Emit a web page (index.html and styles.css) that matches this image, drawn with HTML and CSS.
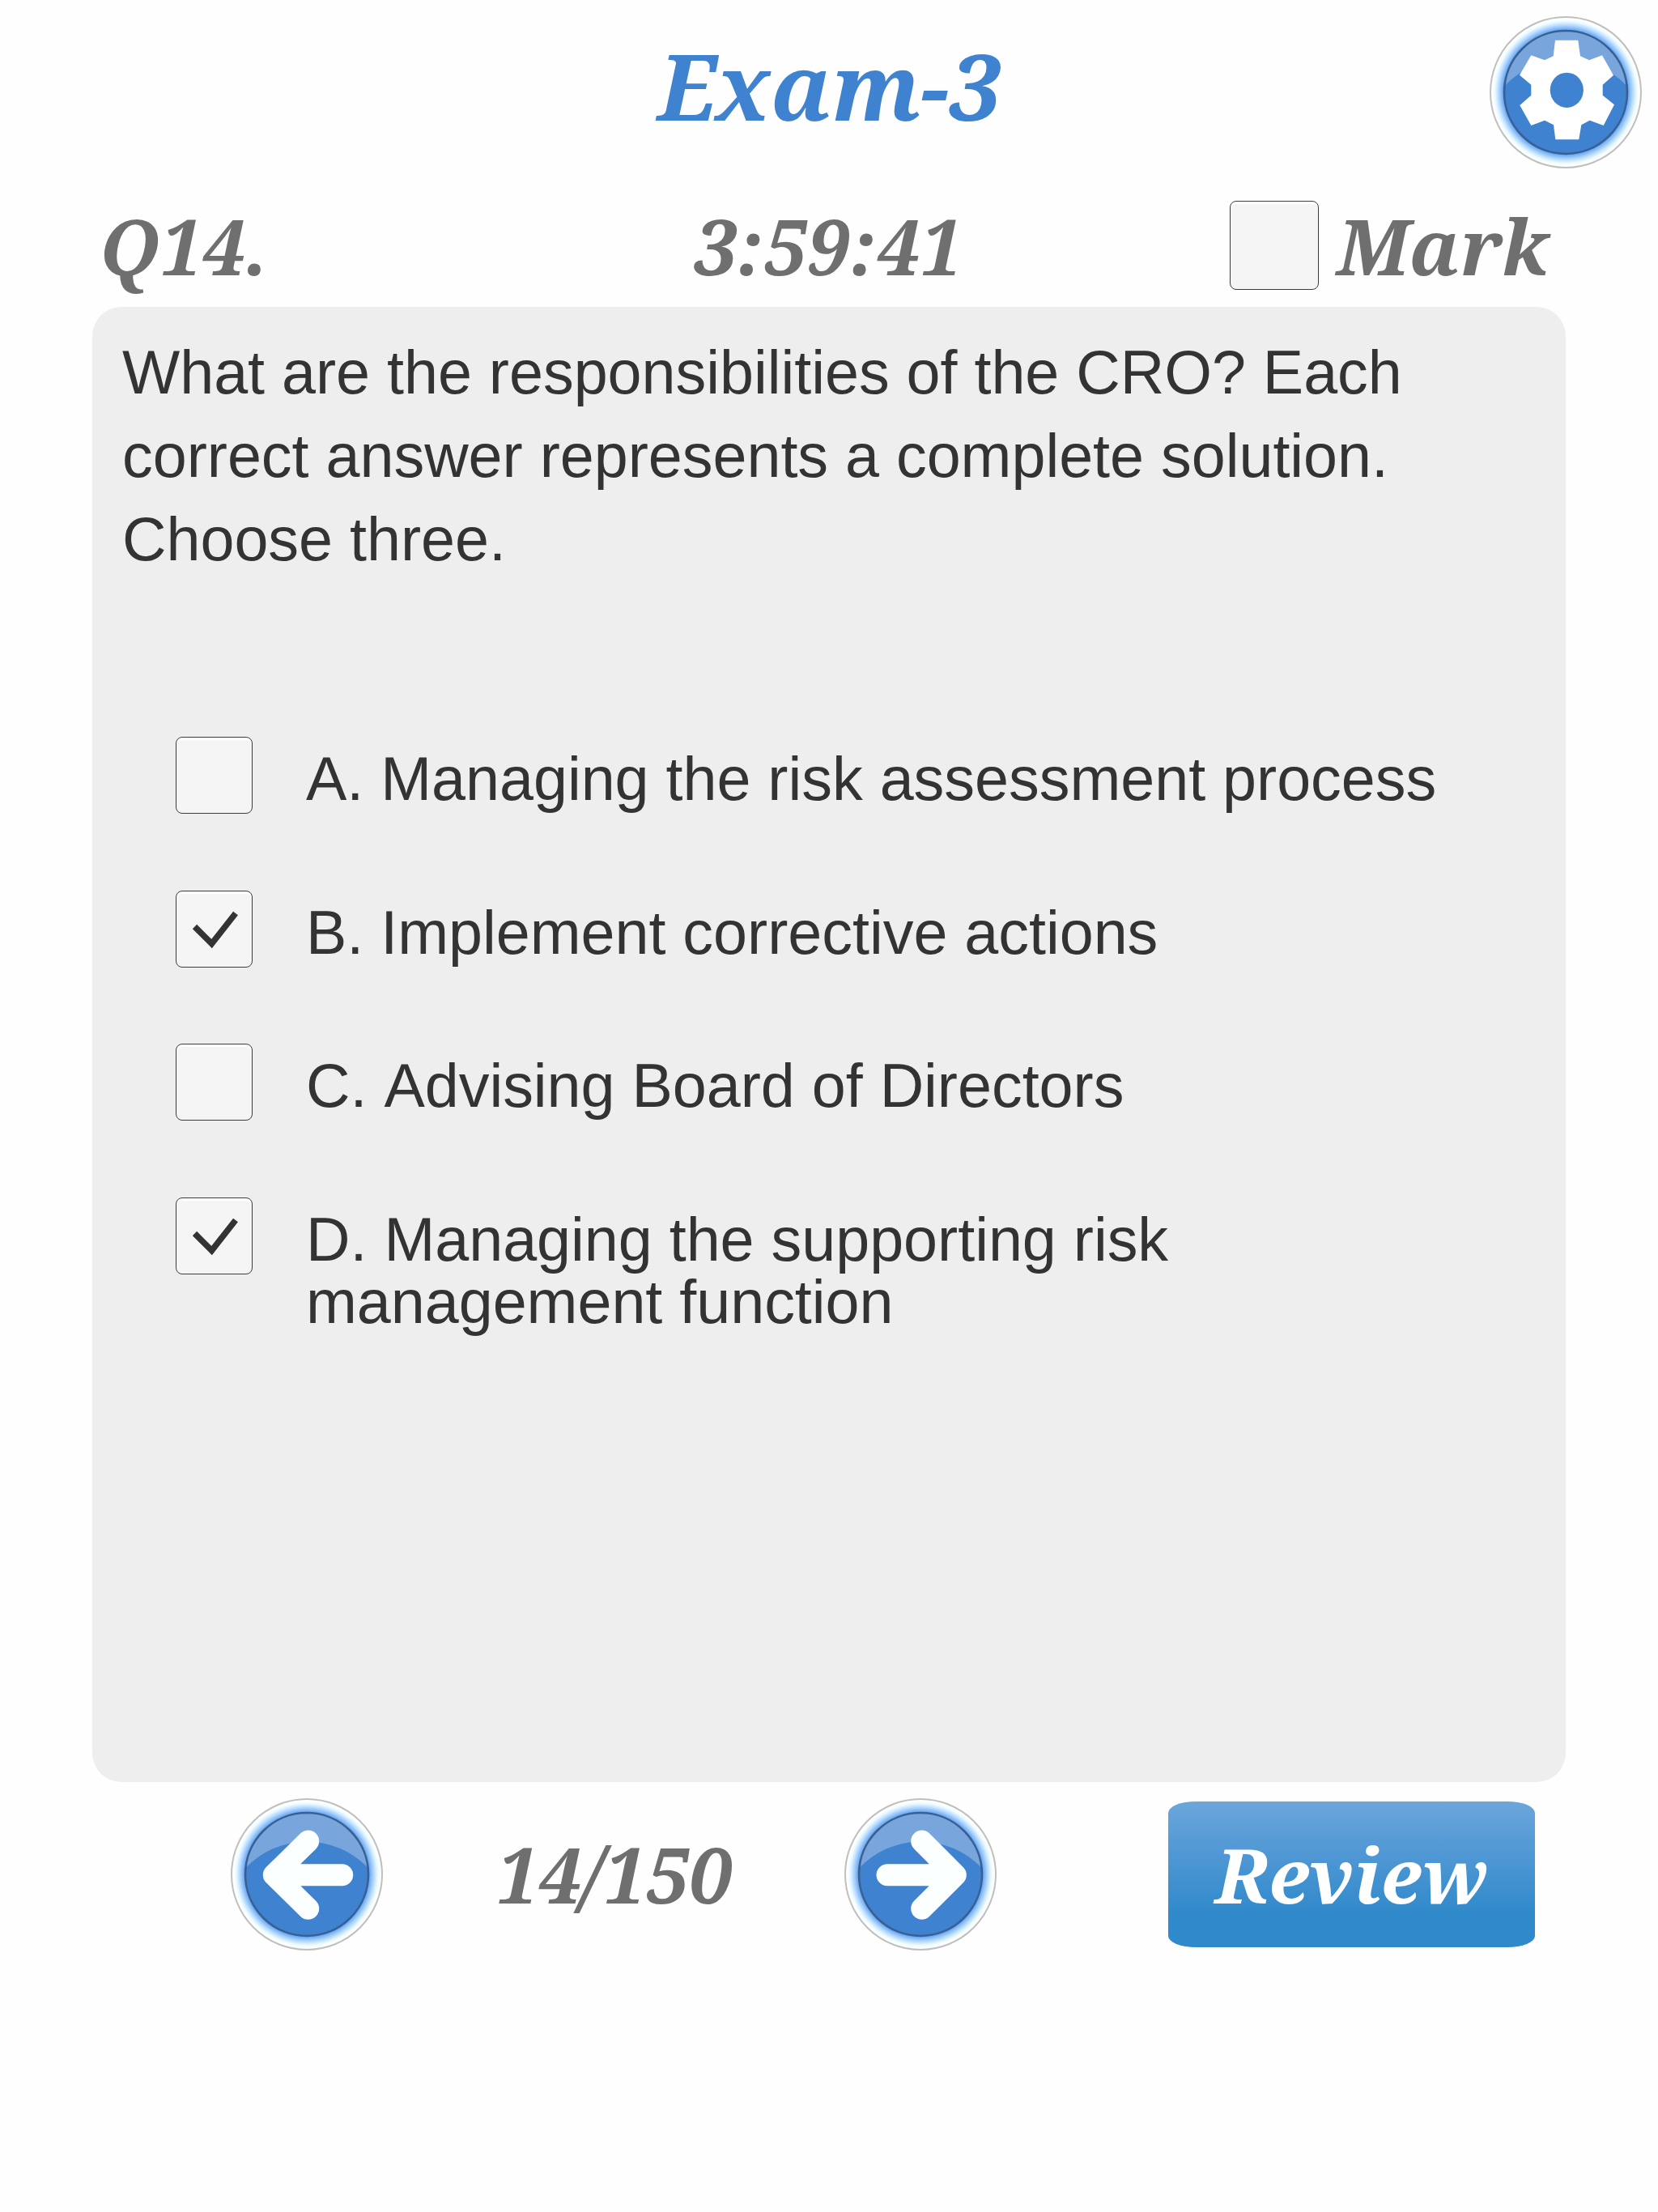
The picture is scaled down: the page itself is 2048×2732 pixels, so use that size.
FILE: index.html
```
<!DOCTYPE html>
<html lang="en">
<head>
  <meta charset="UTF-8" />
  <meta name="viewport" content="width=device-width, initial-scale=1.0"/>
  <title>Exam-3</title>
  <link rel="stylesheet" href="styles.css">
</head>
<body>
  <!-- shared glossy button background -->
  <svg class="defs" width="0" height="0">
    <defs>
      <radialGradient id="glow" gradientUnits="userSpaceOnUse" cx="95" cy="95" r="93">
        <stop offset="0.82" stop-color="#5c9ff0"/>
        <stop offset="0.86" stop-color="#8dc0fb"/>
        <stop offset="0.9" stop-color="#c0e0ff"/>
        <stop offset="0.94" stop-color="#eafaff"/>
        <stop offset="0.97" stop-color="#fdffff"/>
        <stop offset="1" stop-color="#ffffff"/>
      </radialGradient>
      <symbol id="disc" viewBox="0 0 190 190">
        <circle cx="95" cy="95" r="93" fill="url(#glow)" stroke="#bfbfbf" stroke-width="2"/>
        <circle cx="95" cy="95" r="76" fill="#3f82cf"/>
        <path d="M19.5 87A76 76 0 0 1 170.5 87A104 104 0 0 0 19.5 87Z" fill="#78a5dc"/>
        <circle cx="95" cy="95" r="76" fill="none" stroke="#3a6090" stroke-width="2.6"/>
      </symbol>
    </defs>
  </svg>

  <div class="page">
    <header class="header">
      <h1 class="title">Exam-3</h1>
      <button class="round-btn settings" aria-label="Settings">
        <svg viewBox="0 0 190 190">
          <use href="#disc"/>
          <path fill="#fff" d="M82 30.7H110.3L113 50.3 124 55.3 140 49.3 154 74 140.7 85.7V98.7L155 110.3 141.7 136 124.7 129.7 114.3 135.3 111.3 153.3H82.3L80 135.3 69 129.7 52.3 136 38.3 111 52.3 98.7V85.7L38 73.7 52.3 49.3 69 55.3 79.7 50.3Z"/>
          <ellipse cx="96.3" cy="92.3" rx="20.6" ry="21.6" fill="#3f82cf"/>
        </svg>
      </button>
    </header>

    <div class="status">
      <span class="number">Q14.</span>
      <span class="timer">3:59:41</span>
      <label class="mark"><span class="checkbox large"></span><span>Mark</span></label>
    </div>

    <main class="panel">
      <p class="question">What are the responsibilities of the CRO? Each correct answer represents a complete solution. Choose three.</p>
      <ul class="options">
        <li class="option">
          <span class="checkbox"></span>
          <span class="answer">A. Managing the risk assessment process</span>
        </li>
        <li class="option">
          <span class="checkbox">
            <svg viewBox="0 0 93 93"><path d="M22.5 43.5L43.5 64.5 73 27"/></svg>
          </span>
          <span class="answer">B. Implement corrective actions</span>
        </li>
        <li class="option">
          <span class="checkbox"></span>
          <span class="answer">C. Advising Board of Directors</span>
        </li>
        <li class="option">
          <span class="checkbox">
            <svg viewBox="0 0 93 93"><path d="M22.5 43.5L43.5 64.5 73 27"/></svg>
          </span>
          <span class="answer">D. Managing the supporting risk management function</span>
        </li>
      </ul>
    </main>

    <footer class="footer">
      <button class="round-btn" aria-label="Previous">
        <svg viewBox="0 0 190 190">
          <use href="#disc"/>
          <path class="arrow" d="M96.7 54L54.3 95.7 96.7 137.3M54.3 95.7H138.7"/>
        </svg>
      </button>
      <span class="counter">14/150</span>
      <button class="round-btn" aria-label="Next">
        <svg viewBox="0 0 190 190">
          <use href="#disc"/>
          <path class="arrow" d="M96.7 54L138.3 95.7 96.7 137.3M138.3 95.7H54"/>
        </svg>
      </button>
      <button class="review">Review</button>
    </footer>
  </div>
</body>
</html>
```
FILE: styles.css
```
:root {
  --blue: #3f82cf;
  --gray: #6f6f6f;
  --text: #333;
  --panel: #eee;
}

* {
  box-sizing: border-box;
}

body {
  margin: 0;
  background: #fefefe;
  color: var(--text);
  font-family: "Liberation Sans", Arial, sans-serif;
}

button {
  border: 0;
  padding: 0;
  background: none;
}

.defs {
  position: absolute;
}

.page {
  width: 2048px;
  height: 2732px;
  overflow: hidden;
}

.title, .status, .counter, .review {
  font-family: "Droid Serif", "Noto Serif", "Liberation Serif", serif;
  font-weight: bold;
  font-style: italic;
}

.header {
  display: grid;
  grid-template-columns: 1fr auto 1fr;
  height: 248px;
  padding: 19px 19px 0;
}

.title {
  grid-column: 2;
  margin: 0;
  font-size: 113.3px;
  line-height: 173px;
  color: var(--blue);
}

.round-btn {
  width: 190px;
  height: 190px;
}

.round-btn svg {
  display: block;
  width: 190px;
  height: 190px;
}

.settings {
  justify-self: end;
}

.arrow {
  fill: none;
  stroke: #fcffff;
  stroke-width: 27;
  stroke-linecap: round;
  stroke-linejoin: round;
}

.status {
  display: grid;
  grid-template-columns: 1fr auto 1fr;
  height: 131px;
  padding: 0 136px 0 123px;
  font-size: 94.4px;
  line-height: 112px;
  color: var(--gray);
}

.timer {
  padding-left: 11px;
}

.mark {
  display: flex;
  justify-content: flex-end;
  gap: 22px;
}

.checkbox {
  flex: none;
  width: 95px;
  height: 95px;
  border: 1px solid #3c3c3c;
  border-radius: 8px;
  background: #f5f5f5;
  box-shadow: inset 0 3px 0 #fff;
}

.checkbox.large {
  width: 110px;
  height: 110px;
}

.checkbox svg {
  display: block;
  width: 93px;
  height: 93px;
}

.checkbox path {
  fill: none;
  stroke: var(--text);
  stroke-width: 7.5;
}

.panel {
  width: 1820px;
  height: 1822px;
  margin: 0 auto;
  padding: 30px 40px 0 37px;
  border-radius: 36px;
  background: var(--panel);
  font-size: 75.45px;
  font-kerning: none;
}

.question {
  width: 1640px;
  height: 501px;
  margin: 0;
  line-height: 103px;
}

.options {
  margin: 0;
  padding: 0 0 0 66px;
  list-style: none;
}

.option {
  display: flex;
  gap: 66px;
  min-height: 189.6px;
}

.answer {
  width: 1420px;
  padding-top: 14px;
  line-height: 77px;
}

.footer {
  display: flex;
  align-items: center;
  height: 228px;
  padding-left: 284px;
}

.counter {
  width: 568px;
  text-align: center;
  font-size: 94.4px;
  line-height: 116px;
  color: var(--gray);
}

.review {
  width: 453px;
  height: 180px;
  margin-left: 211px;
  border-radius: 34px / 14px;
  background: linear-gradient(#6ca6db, #549ad6 30%, #3089ca 78%);
  color: #fff;
  font-size: 94px;
  line-height: 180px;
}
```
